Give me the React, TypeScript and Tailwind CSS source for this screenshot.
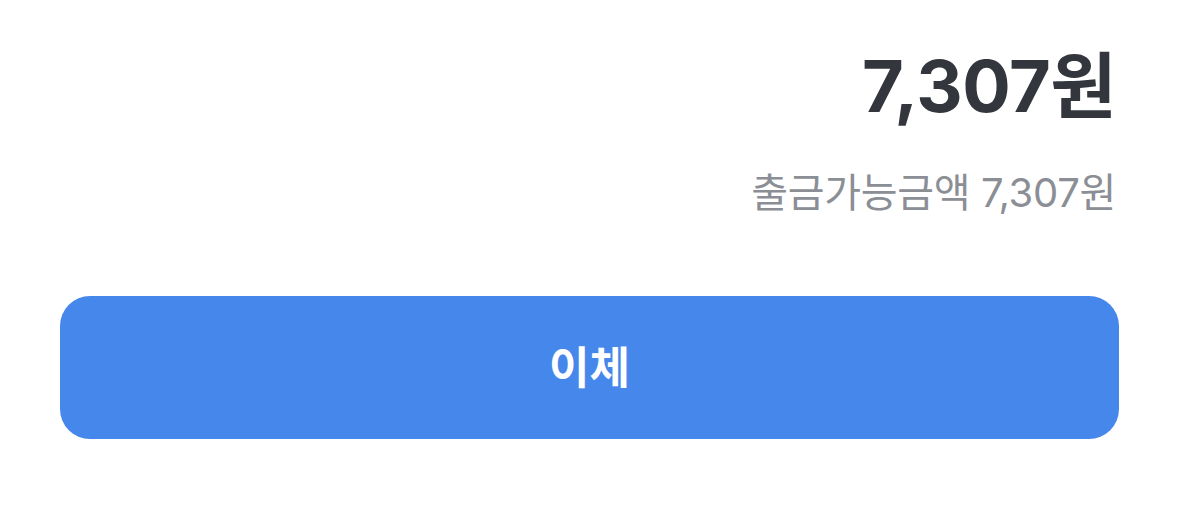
import React from "react";

const font = {
  fontFamily: 'Inter, "Noto Sans CJK KR", "Noto Sans", sans-serif',
};

export default function App() {
  return (
    <section
      className="w-[1179px] h-[516px] bg-white px-[60px] pt-[50px] flex flex-col"
      style={font}
    >
      <div className="flex flex-col items-end pr-[3px]">
        <h1 className="text-[72px] leading-none font-bold text-[#33373d] tracking-[-0.5px]">
          7,307원
        </h1>
        <p className="mt-[51px] text-[40px] leading-none text-[#8b8f95] tracking-[-0.3px]">
          출금가능금액 7,307원
        </p>
      </div>
      <button className="mt-[83px] h-[143px] w-full rounded-[30px] bg-[#4687eb] text-white text-[44px] font-bold flex items-center justify-center">
        이체
      </button>
    </section>
  );
}
